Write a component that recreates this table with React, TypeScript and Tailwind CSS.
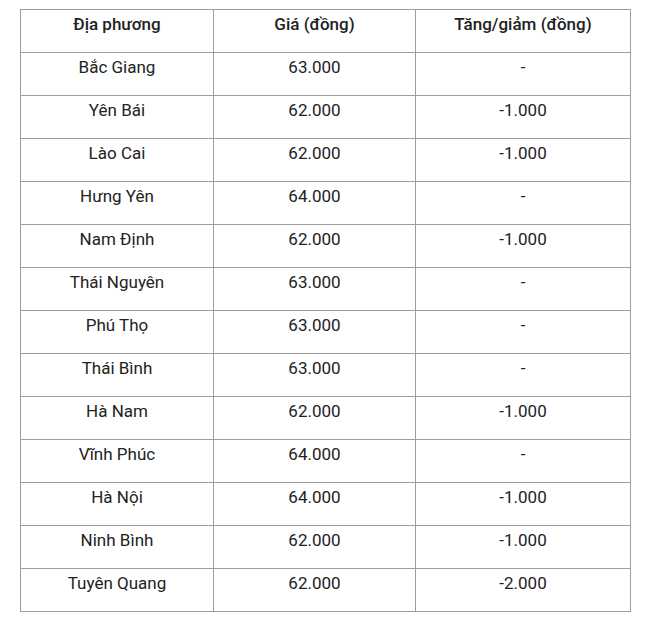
const rows: [string, string, string][] = [
  ["Bắc Giang", "63.000", "-"],
  ["Yên Bái", "62.000", "-1.000"],
  ["Lào Cai", "62.000", "-1.000"],
  ["Hưng Yên", "64.000", "-"],
  ["Nam Định", "62.000", "-1.000"],
  ["Thái Nguyên", "63.000", "-"],
  ["Phú Thọ", "63.000", "-"],
  ["Thái Bình", "63.000", "-"],
  ["Hà Nam", "62.000", "-1.000"],
  ["Vĩnh Phúc", "64.000", "-"],
  ["Hà Nội", "64.000", "-1.000"],
  ["Ninh Bình", "62.000", "-1.000"],
  ["Tuyên Quang", "62.000", "-2.000"],
];

const cell = "h-[43px] border border-[#9e9e9e] px-2 pt-[2px] align-top text-center";

export default function App() {
  return (
    <div className="min-h-[622px] w-[652px] bg-white pt-[9px] pl-[20px] font-['Roboto',sans-serif] text-[17px] leading-[24px] text-[#222]">
      <table className="w-[610px] table-fixed border-collapse">
        <colgroup>
          <col className="w-[193px]" />
          <col className="w-[202px]" />
          <col className="w-[215px]" />
        </colgroup>
        <thead>
          <tr>
            <th className={`${cell} font-medium`}>Địa phương</th>
            <th className={`${cell} font-medium`}>Giá (đồng)</th>
            <th className={`${cell} font-medium`}>Tăng/giảm (đồng)</th>
          </tr>
        </thead>
        <tbody>
          {rows.map(([place, price, diff]) => (
            <tr key={place}>
              <td className={cell}>{place}</td>
              <td className={cell}>{price}</td>
              <td className={cell}>{diff}</td>
            </tr>
          ))}
        </tbody>
      </table>
    </div>
  );
}
